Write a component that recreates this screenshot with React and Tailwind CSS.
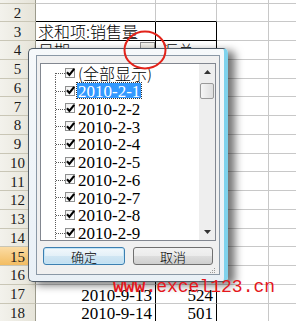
import React from 'react';

const SERIF = "font-['Liberation_Serif','Noto_Sans_CJK_SC',serif]";
const CJK = "font-['Noto_Sans_CJK_SC',sans-serif] font-light";

function HeaderCell({ n, active, h }) {
  return (
    <div
      className={`${h} w-[36px] shrink-0 border-r border-b border-r-[#9b9a8c] border-b-[#c9c6b6] flex items-center justify-center ${
        active
          ? 'bg-[linear-gradient(to_bottom,#fbdca4,#f3bd62)]'
          : 'bg-[linear-gradient(to_right,#f3f2ec,#e6e4d9)]'
      }`}
    >
      {n > 1 && (
        <span className={`${SERIF} text-[15px] leading-none text-[#1a1a1a] pt-[2px]`}>{n}</span>
      )}
    </div>
  );
}

function Row({ n, h = 'h-[18.75px]', active, b, c, pivot, bottomBlack, dropdown, bLeft, cLeft }) {
  const bBorder = `${pivot ? 'border-r-black' : ''} ${bottomBlack ? 'border-b-black' : ''}`;
  return (
    <div className={`flex ${h} shrink-0`}>
      <HeaderCell n={n} active={active} h={h} />
      <div
        className={`${h} w-[120px] shrink-0 border-r border-b border-[#c8c8c8] ${bBorder} flex items-center ${
          bLeft ? 'justify-between pl-[2px]' : 'justify-end pr-[3px]'
        } overflow-hidden`}
      >
        {b && (
          <span
            className={`${bLeft ? CJK + ' text-[16px]' : SERIF + ' text-[17px] pt-[3px]'} leading-none text-black whitespace-nowrap`}
          >
            {b}
          </span>
        )}
        {dropdown && (
          <div className="w-[15px] h-[16px] self-start mt-[1px] border border-[#8e8e8e] bg-[linear-gradient(to_bottom,#f4f3ee,#d9d6c8)] flex items-start justify-center pt-[5px]">
            <svg width="7" height="4" viewBox="0 0 7 4">
              <path d="M0 0 L7 0 L3.5 4 Z" fill="#000" />
            </svg>
          </div>
        )}
      </div>
      <div
        className={`${h} w-[61px] shrink-0 border-r border-b border-[#c8c8c8] ${bBorder} flex items-center ${
          cLeft ? 'justify-start pl-[6px]' : 'justify-end pr-[3px]'
        } overflow-hidden`}
      >
        {c && (
          <span
            className={`${cLeft ? CJK + ' text-[16px]' : SERIF + ' text-[17px] pt-[3px]'} leading-none text-black whitespace-nowrap`}
          >
            {c}
          </span>
        )}
      </div>
      <div className={`${h} w-[52px] shrink-0 border-r border-b border-[#c8c8c8]`} />
      <div className={`${h} flex-1 border-b border-[#c8c8c8]`} />
    </div>
  );
}

function Sheet() {
  const mids = [];
  for (let n = 5; n <= 15; n++) {
    mids.push(<Row key={n} n={n} pivot active={n === 15} />);
  }
  return (
    <div className="flex flex-col w-[296px]">
      <Row n={1} h="h-[3.5px]" />
      <Row n={2} bottomBlack />
      <Row n={3} b="求和项:销售量" bLeft pivot bottomBlack />
      <Row n={4} b="日期" bLeft cLeft c="汇总" pivot dropdown />
      {mids}
      <Row n={16} b="2010-9-12" c="536" pivot />
      <Row n={17} b="2010-9-13" c="524" pivot />
      <Row n={18} b="2010-9-14" c="501" pivot />
    </div>
  );
}

function Check() {
  return (
    <div className="w-[10px] h-[10px] shrink-0 border border-[#8e8f8f] bg-[linear-gradient(135deg,#f0f0f0,#ffffff)] flex items-center justify-center">
      <svg width="9" height="9" viewBox="0 0 9 9" className="overflow-visible">
        <path d="M1 4.2 L3.4 6.9 L8.2 0.8" stroke="#000" strokeWidth="2.1" fill="none" />
      </svg>
    </div>
  );
}

function TreeItem({ label, first, selected, cjk }) {
  return (
    <div className="flex items-center h-[17.75px] shrink-0">
      <svg width="24" height="17.75" viewBox="0 0 24 17.75" className="shrink-0">
        <line
          x1="14.5"
          y1={first ? 9 : 0}
          x2="14.5"
          y2="17.75"
          stroke="#5a5a5a"
          strokeWidth="1"
          strokeDasharray="1 1"
        />
        <line x1="15" y1="9.5" x2="24" y2="9.5" stroke="#5a5a5a" strokeWidth="1" strokeDasharray="1 1" />
      </svg>
      <Check />
      <span
        className={`ml-[2px] px-[1px] h-[15px] flex items-center whitespace-nowrap leading-none ${
          cjk ? CJK + ' text-[16px]' : SERIF + ' text-[17px] pt-[2px]'
        } ${selected ? 'bg-[#3399ff] text-white outline outline-1 outline-dotted outline-[#333]' : 'text-black'}`}
      >
        {label}
      </span>
    </div>
  );
}

function Dialog() {
  const items = [];
  for (let d = 1; d <= 9; d++) {
    items.push(<TreeItem key={d} label={`2010-2-${d}`} selected={d === 1} />);
  }
  return (
    <div className="absolute left-[28px] top-[48px] w-[200px] h-[234px] rounded-[5px] border border-[#4f5a66] border-r-4 border-r-[#7fd2ec] bg-[linear-gradient(to_bottom,#f6f9fb,#e9f0f6)] shadow-[7px_3px_9px_rgba(0,0,0,0.55)] pl-[7px] pt-[6px] pr-[4px] pb-[6px]">
      <div className="h-full border border-[#8a98a6] bg-[#f0f0f0] flex flex-col px-[3px] pt-[7px]">
        <div className="h-[178px] shrink-0 border border-[#828790] bg-white flex overflow-hidden">
          <div className="flex-1 flex flex-col overflow-hidden">
            <TreeItem label="(全部显示)" first cjk />
            {items}
          </div>
          <div className="w-[16px] shrink-0 bg-[#eeeeee] flex flex-col items-center">
            <div className="h-[16px] w-full flex items-center justify-center">
              <svg width="7" height="4" viewBox="0 0 7 4">
                <path d="M0 4 L7 4 L3.5 0 Z" fill="#333" />
              </svg>
            </div>
            <div className="mt-[3px] h-[16px] w-[14px] rounded-[2px] border border-[#9a9a9a] bg-[linear-gradient(to_right,#f6f6f6,#dedede)]" />
            <div className="flex-1" />
            <div className="h-[16px] w-full flex items-center justify-center">
              <svg width="7" height="4" viewBox="0 0 7 4">
                <path d="M0 0 L7 0 L3.5 4 Z" fill="#333" />
              </svg>
            </div>
          </div>
        </div>
        <div className="mt-[6px] flex gap-[8px] pl-[3px]">
          <button className="w-[82px] h-[18px] rounded-[3px] border border-[#3c7fb1] shadow-[inset_0_0_0_1px_#c4e5f6] bg-[linear-gradient(to_bottom,#f2f8fc_0%,#e3f0f8_50%,#d0e6f3_51%,#c2def0_100%)] flex items-center justify-center">
            <span className={`${CJK} text-[13px] leading-none text-black`}>确定</span>
          </button>
          <button className="w-[80px] h-[18px] rounded-[3px] border border-[#707070] bg-[linear-gradient(to_bottom,#f2f2f2_0%,#ebebeb_50%,#dddddd_51%,#cfcfcf_100%)] flex items-center justify-center">
            <span className={`${CJK} text-[13px] leading-none text-black`}>取消</span>
          </button>
        </div>
        <div className="flex-1 flex items-end justify-end">
          <svg width="8" height="8" viewBox="0 0 8 8">
            <rect x="6" y="2" width="1" height="1" fill="#9a9a9a" />
            <rect x="4" y="4" width="1" height="1" fill="#9a9a9a" />
            <rect x="6" y="4" width="1" height="1" fill="#9a9a9a" />
            <rect x="2" y="6" width="1" height="1" fill="#9a9a9a" />
            <rect x="4" y="6" width="1" height="1" fill="#9a9a9a" />
            <rect x="6" y="6" width="1" height="1" fill="#9a9a9a" />
          </svg>
        </div>
      </div>
    </div>
  );
}

export default function App() {
  return (
    <div className="relative w-[296px] h-[321px] overflow-hidden bg-white">
      <Sheet />
      <Dialog />
      <svg className="absolute left-[123px] top-[30px]" width="44" height="40" viewBox="0 0 44 40">
        <ellipse cx="22" cy="20" rx="20.5" ry="18.5" fill="none" stroke="#e2231a" strokeWidth="2" />
      </svg>
      <div className="absolute left-[113px] top-[278px] font-['Liberation_Mono',monospace] text-[18px] leading-[18px] text-[#e4161c] whitespace-nowrap">
        <span className="font-bold">www.</span>excel123.cn
      </div>
    </div>
  );
}
